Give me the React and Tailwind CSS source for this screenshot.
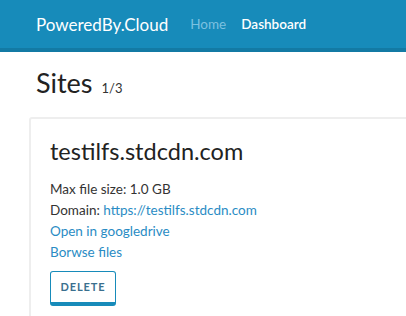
export default function App() {
    return (
        <div className="min-h-screen bg-white overflow-hidden font-['Lato','Liberation_Sans',sans-serif]">
            {/* Navbar */}
            <nav className="h-[52px] bg-[#178bba] border-b-4 border-[#137aa4] flex items-center px-[36px]">
                <span className="text-white text-[17px] leading-none mr-[22px]">PoweredBy.Cloud</span>
                <a className="text-[#7cc1e0] text-[13.5px] mr-[15px]">Home</a>
                <a className="text-white text-[13.5px] font-semibold">Dashboard</a>
            </nav>

            {/* Heading */}
            <div className="px-[36px] pt-[13px] flex items-baseline">
                <h1 className="text-[#222] text-[27px] leading-[36px]">Sites</h1>
                <span className="text-[#333] text-[13px] ml-[9px]">1/3</span>
            </div>

            {/* Site Card */}
            <div className="ml-[29px] -mr-[20px] mt-[16px] border-2 border-[#eeeeee] rounded-[3px] px-[19px] pt-[17px] pb-[20px]">
                <h2 className="text-[#222] text-[23.5px] leading-[30px] mb-[13px]">testilfs.stdcdn.com</h2>
                <div className="text-[13.5px] leading-[21px] text-[#333]">
                    <p>Max file size: 1.0 GB</p>
                    <p>Domain: <a className="text-[#2a8cc4]">https://testilfs.stdcdn.com</a></p>
                    <p><a className="text-[#2a8cc4]">Open in googledrive</a></p>
                    <p><a className="text-[#2a8cc4]">Borwse files</a></p>
                </div>
                <button className="mt-[8px] w-[66px] h-[35px] border border-[#178bba] border-b-4 rounded-[3px] text-[11px] font-bold tracking-[0.08em] text-[#3a6f8e]">
                    DELETE
                </button>
            </div>
        </div>
    )
}
